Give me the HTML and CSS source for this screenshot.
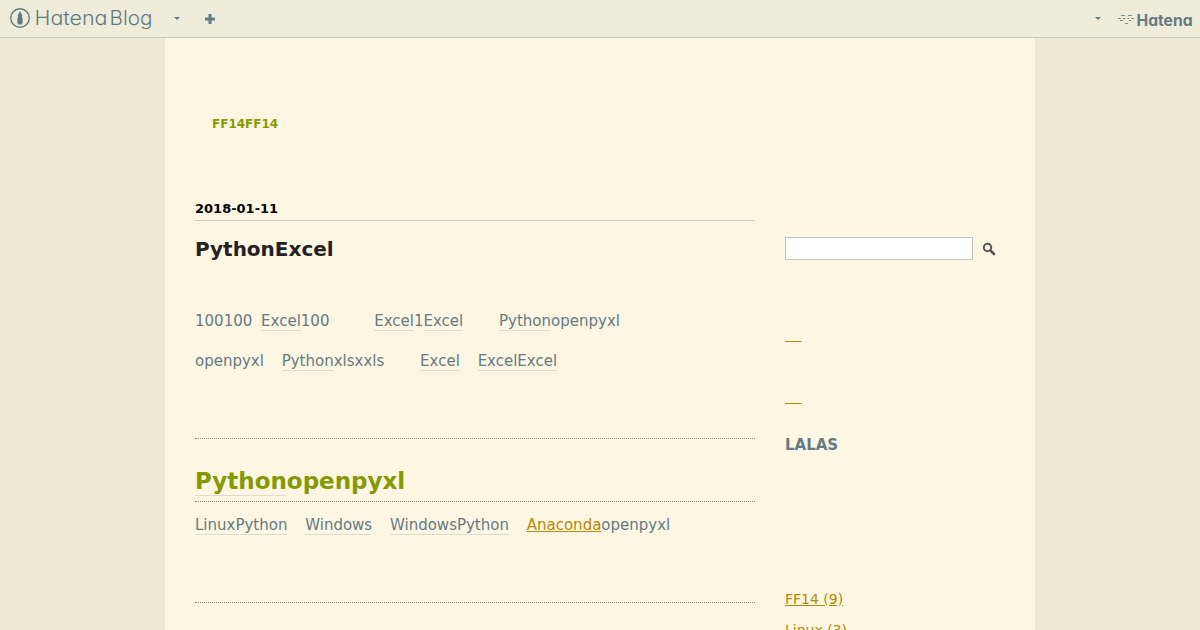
FILE: index.html
```html
<!DOCTYPE html>
<html lang="ja">
<head>
  <meta charset="UTF-8">
  <meta name="viewport" content="width=device-width, initial-scale=1.0">
  <title>PythonExcel</title>
  <link rel="stylesheet" href="styles.css">
</head>
<body>
  <header class="globalheader">
    <svg class="logo" width="146" height="37" viewBox="0 0 146 37">
      <circle cx="12" cy="18" r="9.3" fill="none" stroke="#657b83" stroke-width="1.4"/>
      <path d="M12 11 L14.400 15.500 L14 17 L14.700 18.500 V22 L14 24.500 H10 L9.300 22 V18.500 L10 17 L9.600 15.500 Z" fill="#657b83"/>
      <text class="logo-text" x="26.500" y="25" textLength="73" lengthAdjust="spacingAndGlyphs">Hatena</text>
      <text class="logo-text" x="101.500" y="25" textLength="43" lengthAdjust="spacingAndGlyphs">Blog</text>
    </svg>
    <span class="arrow"></span>
    <svg class="plus" width="10" height="10" viewBox="0 0 10 10"><path d="M5 0V10M0 5H10" stroke="#657b83" stroke-width="3"/></svg>
    <span class="arrow arrow-right"></span>
    <svg class="hatena" width="77" height="37" viewBox="0 0 77 37">
      <g stroke="#7f8f92" stroke-width="1.2">
        <path d="M4 15.5H8M11 15.5H15M1 18.500H4M6 18.500H8.500M10.500 18.500H12M14 18.500H17M3 20.500H6M12 20.500H14M8 23.500H11"/>
      </g>
      <text class="hatena-text" x="19.500" y="26" textLength="56" lengthAdjust="spacingAndGlyphs">Hatena</text>
    </svg>
  </header>

  <div class="container">
    <h1 class="blog-title"><a href="#">FF14FF14</a></h1>
    <div class="content">
      <main class="main">
        <div class="date">2018-01-11</div>
        <h2 class="entry-title">PythonExcel</h2>
        <div class="entry">
          <p>100100<span class="keyword gap1">Excel</span>100<span class="keyword gap5">Excel</span>1<span class="keyword">Excel</span><span class="keyword gap4">Python</span>openpyxl</p>
          <p>openpyxl<span class="keyword gap2">Python</span>xlsxxls<span class="keyword gap4">Excel</span><span class="keyword gap2">ExcelExcel</span></p>
          <h3 class="blank"></h3>
          <h3><span class="keyword">Python</span>openpyxl</h3>
          <p><span class="keyword">LinuxPython</span><span class="keyword gap2">Windows</span><span class="keyword gap2">WindowsPython</span><a class="gap2" href="#">Anaconda</a>openpyxl</p>
          <h3 class="blank"></h3>
        </div>
      </main>
      <aside class="sidebar">
        <form class="search">
          <input type="text" aria-label="search">
          <svg width="14" height="14" viewBox="0 0 14 14" fill="none" stroke="#555"><circle cx="5.500" cy="5.500" r="3.700" stroke-width="2"/><path d="M8.500 8.500L12.800 12.800" stroke-width="2.500"/></svg>
        </form>
        <ul class="recent">
          <li><a href="#">&nbsp;&nbsp;&nbsp;&nbsp;</a></li>
          <li><a href="#">&nbsp;&nbsp;&nbsp;&nbsp;</a></li>
        </ul>
        <div class="author">LALAS</div>
        <ul class="categories">
          <li><a href="#">FF14 (9)</a></li>
          <li><a href="#">Linux (3)</a></li>
        </ul>
      </aside>
    </div>
  </div>
</body>
</html>
```
FILE: styles.css
```css
* {
  box-sizing: border-box;
}

body {
  margin: 0;
  height: 630px;
  overflow: hidden;
  background: #eee8d5;
  color: #657b83;
  font-family: "DejaVu Sans", sans-serif;
  font-size: 15px;
}

a {
  color: #b58900;
}

h1, h2, h3, p, ul {
  margin: 0;
  padding: 0;
}

ul {
  list-style: none;
}

.globalheader {
  display: flex;
  align-items: center;
  height: 38px;
  padding: 0 6px 0 8px;
  background: #efecdb;
  border-bottom: 1px solid #cbc8b9;
}

.logo-text {
  font: 300 20px Inter, sans-serif;
  font-feature-settings: "cv11";
  fill: #657b83;
}

.hatena-text {
  font: 700 15.5px Inter, sans-serif;
  font-feature-settings: "cv11";
  fill: #657b83;
}

.arrow {
  margin-left: 20px;
  border: 3px solid transparent;
  border-top-color: #657b83;
  border-bottom: 0;
}

.plus {
  margin-left: 25px;
}

.arrow-right {
  margin-left: auto;
}

.hatena {
  margin-left: 16px;
}

.container {
  width: 870px;
  height: 592px;
  margin: 0 auto;
  padding: 76px 30px 0;
  background: #fdf6e3;
  overflow: hidden;
}

.blog-title {
  height: 86px;
  padding-left: 17px;
  font-size: 12px;
  line-height: 20px;
}

.blog-title a {
  color: #859900;
  text-decoration: none;
}

.content {
  display: flex;
  gap: 30px;
}

.main {
  width: 560px;
}

.date {
  height: 21px;
  border-bottom: 1px solid #cccabd;
  color: #000;
  font-size: 13px;
  font-weight: bold;
  line-height: 18px;
}

.entry-title {
  padding-top: 13px;
  color: #222;
  font-size: 20px;
  line-height: 30px;
}

.entry {
  padding-top: 43px;
}

.entry p {
  height: 27px;
  margin-bottom: 13px;
  line-height: 29px;
}

.keyword {
  border-bottom: 1px solid #dddccf;
}

.gap1 {
  margin-left: 8.8px;
}

.gap2 {
  margin-left: 17.8px;
}

.gap4 {
  margin-left: 35.8px;
}

.gap5 {
  margin-left: 44.8px;
}

.entry h3 {
  height: 63px;
  margin-bottom: 9px;
  padding-top: 24px;
  border-bottom: 1px dotted #8f927f;
  color: #859900;
  font-size: 23px;
  line-height: 36px;
}

.entry h3 .keyword {
  padding-bottom: 1px;
}

.entry h3.blank {
  height: 52px;
  margin-bottom: 0;
}

.sidebar {
  width: 220px;
  padding-top: 37px;
  font-size: 14px;
}

.search {
  display: flex;
  align-items: center;
  gap: 9px;
}

.search input {
  width: 188px;
  height: 23px;
  border: 1px solid #c4c5bd;
  background: #fff;
}

.recent {
  padding-top: 66px;
  font-size: 13px;
}

.recent li {
  height: 62px;
  line-height: 20px;
}

.author {
  margin-top: -15px;
  font-size: 15px;
  font-weight: bold;
  line-height: 20px;
}

.categories {
  padding-top: 134px;
}

.categories li {
  height: 31px;
  line-height: 20px;
}
```
